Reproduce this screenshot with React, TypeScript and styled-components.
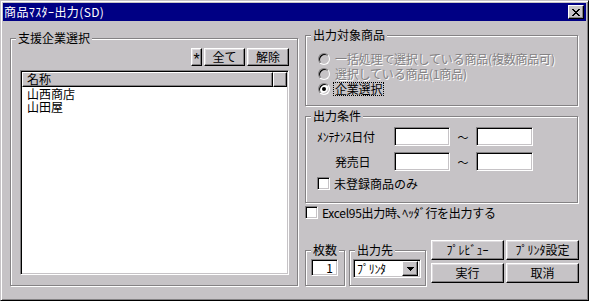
import React from 'react';
import styled, { createGlobalStyle } from 'styled-components';

const FACE = '#c6c3c6';
const SHADOW = '#848284';

const GlobalStyle = createGlobalStyle`
  html, body {
    margin: 0;
    padding: 0;
    background: ${FACE};
  }
  body {
    font-family: "Noto Sans CJK JP", "Liberation Sans", sans-serif;
    font-size: 12px;
    color: #000;
  }
  * {
    box-sizing: border-box;
  }
`;

const Window = styled.div`
  width: 589px;
  height: 301px;
  background: ${FACE};
  border: 1px solid;
  border-color: ${FACE} #000 #000 ${FACE};
  box-shadow: inset 1px 1px #fff, inset -1px -1px ${SHADOW};
  padding: 2px;
  display: flex;
  flex-direction: column;
`;

const TitleBar = styled.div`
  height: 18px;
  background: #000084;
  color: #fff;
  display: flex;
  align-items: center;
  justify-content: space-between;
  padding: 0 2px 0 1px;
  line-height: 14px;
`;

const TitleText = styled.span`
  font-size: 12px;
  letter-spacing: 0.4px;
`;

const CloseBtn = styled.div`
  width: 16px;
  height: 14px;
  background: ${FACE};
  border: 1px solid;
  border-color: #fff #000 #000 #fff;
  box-shadow: inset -1px -1px ${SHADOW};
  display: flex;
  align-items: center;
  justify-content: center;
`;

const Body = styled.div`
  flex: 1;
  display: flex;
  gap: 7px;
  padding: 14px 0 0 7px;
`;

const GroupBox = styled.div<{ w: number; h: number }>`
  position: relative;
  width: ${p => p.w}px;
  height: ${p => p.h}px;
  border: 1px solid ${SHADOW};
  box-shadow: inset 1px 1px #fff, 1px 1px #fff;
  flex-shrink: 0;
`;

const Legend = styled.span`
  position: absolute;
  top: -8px;
  left: 5px;
  padding: 0 2px;
  background: ${FACE};
  line-height: 14px;
  white-space: nowrap;
`;

const LeftGroup = styled(GroupBox)`
  margin-top: 3px;
  padding: 9px 8px 0 9px;
`;

const ButtonRow = styled.div`
  display: flex;
  justify-content: flex-end;
  gap: 2px;
`;

const Button = styled.button<{ w: number; h: number }>`
  width: ${p => p.w}px;
  height: ${p => p.h}px;
  padding: 0;
  margin: 0;
  background: ${FACE};
  border: 1px solid;
  border-color: #fff #000 #000 #fff;
  box-shadow: inset -1px -1px ${SHADOW}, inset 1px 1px #dedbde;
  font-family: inherit;
  font-size: 12px;
  line-height: 14px;
  color: #000;
  display: flex;
  align-items: center;
  justify-content: center;
  white-space: nowrap;
`;

const StarButton = styled(Button)`
  font-family: "Liberation Sans", sans-serif;
  font-size: 16px;
  line-height: 12px;
  padding-top: 5px;
`;

const Sunken = styled.div<{ w: number; h: number }>`
  width: ${p => p.w}px;
  height: ${p => p.h}px;
  background: #fff;
  border: 1px solid;
  border-color: ${SHADOW} #fff #fff ${SHADOW};
  box-shadow: inset 1px 1px #000, inset -1px -1px ${FACE};
  flex-shrink: 0;
`;

const ListBox = styled(Sunken)`
  margin-top: 4px;
  padding: 1px;
  display: flex;
  flex-direction: column;
`;

const ListHeader = styled.div`
  display: flex;
  height: 15px;
`;

const HeaderCell = styled.div<{ w?: number }>`
  ${p => (p.w ? `width: ${p.w}px;` : 'flex: 1;')}
  height: 15px;
  background: ${FACE};
  border: 1px solid;
  border-color: #fff #000 #000 #fff;
  box-shadow: inset -1px -1px ${SHADOW};
  padding-left: 4px;
  line-height: 12px;
`;

const ListItem = styled.div`
  padding-left: 5px;
  line-height: 13px;
  height: 13px;
`;

const RightColumn = styled.div`
  width: 273px;
  display: flex;
  flex-direction: column;
`;

const RadioList = styled.div`
  padding: 15px 0 0 12px;
  display: flex;
  flex-direction: column;
`;

const RadioRow = styled.div`
  height: 15px;
  display: flex;
  align-items: center;
  gap: 4px;
`;

const RadioCircle = styled.span<{ on?: boolean; disabled?: boolean }>`
  width: 12px;
  height: 12px;
  border-radius: 50%;
  border: 1px solid;
  border-color: ${SHADOW} #fff #fff ${SHADOW};
  box-shadow: inset 1px 1px #000, inset -1px -1px ${FACE};
  background: ${p => (p.disabled ? FACE : '#fff')};
  display: flex;
  align-items: center;
  justify-content: center;
  flex-shrink: 0;
  &::after {
    content: '';
    display: ${p => (p.on ? 'block' : 'none')};
    width: 4px;
    height: 4px;
    border-radius: 50%;
    background: #000;
  }
`;

const RadioText = styled.span<{ disabled?: boolean; focused?: boolean }>`
  display: inline-block;
  height: 14px;
  line-height: 12px;
  white-space: nowrap;
  letter-spacing: -0.2px;
  color: ${p => (p.disabled ? SHADOW : '#000')};
  text-shadow: ${p => (p.disabled ? '1px 1px #fff' : 'none')};
  border: 1px dotted ${p => (p.focused ? '#000' : 'transparent')};
  padding: 0 1px;
  margin-left: -1px;
`;

const CondGroup = styled(GroupBox)`
  margin-top: 10px;
  padding: 10px 0 0 0;
`;

const FieldRow = styled.div`
  height: 19px;
  margin-bottom: 6px;
  display: flex;
  align-items: center;
`;

const FieldLabel = styled.span<{ indent: number }>`
  width: 88px;
  padding-left: ${p => p.indent}px;
  white-space: nowrap;
  letter-spacing: -0.3px;
`;

const Tilde = styled.span`
  width: 26px;
  text-align: center;
  font-size: 11px;
`;

const CheckRow = styled.label<{ indent: number }>`
  display: flex;
  align-items: center;
  gap: 4px;
  padding-left: ${p => p.indent}px;
  height: 13px;
  line-height: 13px;
  white-space: nowrap;
`;

const CheckBox = styled(Sunken)``;

const ExcelRow = styled(CheckRow)`
  margin-top: 3px;
  letter-spacing: -0.3px;
`;

const BottomRow = styled.div`
  margin-top: 21px;
  display: flex;
  align-items: flex-start;
`;

const SmallGroup = styled(GroupBox)<{ gapLeft: number; padLeft: number }>`
  margin-top: 10px;
  margin-left: ${p => p.gapLeft}px;
  padding: 8px 0 0 ${p => p.padLeft}px;
`;

const CountInput = styled(Sunken)`
  text-align: right;
  padding-right: 4px;
  line-height: 15px;
`;

const Select = styled(Sunken)`
  display: flex;
  align-items: center;
  justify-content: space-between;
  padding: 2px;
  line-height: 14px;
`;

const SelectText = styled.span`
  padding-left: 1px;
  letter-spacing: -0.3px;
`;

const DropBtn = styled.span`
  width: 16px;
  height: 15px;
  background: ${FACE};
  border: 1px solid;
  border-color: #fff #000 #000 #fff;
  box-shadow: inset -1px -1px ${SHADOW};
  display: flex;
  align-items: center;
  justify-content: center;
`;

const ActionGrid = styled.div`
  margin-left: 5px;
  display: grid;
  grid-template-columns: 73px 73px;
  grid-template-rows: 20px 20px;
  column-gap: 2px;
  row-gap: 3px;
`;

const App = () => {
  return (
    <>
      <GlobalStyle />
      <Window>
        <TitleBar>
          <TitleText>商品ﾏｽﾀｰ出力(SD)</TitleText>
          <CloseBtn>
            <svg width="8" height="7" viewBox="0 0 8 7" shapeRendering="crispEdges">
              <path d="M0 0h2v1H0zM6 0h2v1H6zM1 1h2v1H1zM5 1h2v1H5zM2 2h4v1H2zM3 3h2v1H3zM2 4h4v1H2zM1 5h2v1H1zM5 5h2v1H5zM0 6h2v1H0zM6 6h2v1H6z" fill="#000" />
            </svg>
          </CloseBtn>
        </TitleBar>
        <Body>
          <LeftGroup w={288} h={248}>
            <Legend>支援企業選択</Legend>
            <ButtonRow>
              <StarButton w={11} h={18}>*</StarButton>
              <Button w={41} h={18}>全て</Button>
              <Button w={42} h={18}>解除</Button>
            </ButtonRow>
            <ListBox w={269} h={205}>
              <ListHeader>
                <HeaderCell w={251}>名称</HeaderCell>
                <HeaderCell />
              </ListHeader>
              <ListItem>山西商店</ListItem>
              <ListItem>山田屋</ListItem>
            </ListBox>
          </LeftGroup>
          <RightColumn>
            <GroupBox w={273} h={71}>
              <Legend>出力対象商品</Legend>
              <RadioList>
                <RadioRow>
                  <RadioCircle disabled />
                  <RadioText disabled>一括処理で選択している商品(複数商品可)</RadioText>
                </RadioRow>
                <RadioRow>
                  <RadioCircle disabled />
                  <RadioText disabled>選択している商品(1商品)</RadioText>
                </RadioRow>
                <RadioRow>
                  <RadioCircle on />
                  <RadioText focused>企業選択</RadioText>
                </RadioRow>
              </RadioList>
            </GroupBox>
            <CondGroup w={273} h={87}>
              <Legend>出力条件</Legend>
              <FieldRow>
                <FieldLabel indent={11}>ﾒﾝﾃﾅﾝｽ日付</FieldLabel>
                <Sunken w={56} h={19} />
                <Tilde>～</Tilde>
                <Sunken w={57} h={19} />
              </FieldRow>
              <FieldRow>
                <FieldLabel indent={29}>発売日</FieldLabel>
                <Sunken w={56} h={19} />
                <Tilde>～</Tilde>
                <Sunken w={57} h={19} />
              </FieldRow>
              <CheckRow indent={11}>
                <CheckBox w={13} h={13} />
                <span>未登録商品のみ</span>
              </CheckRow>
            </CondGroup>
            <ExcelRow indent={0}>
              <CheckBox w={13} h={13} />
              <span>Excel95出力時､ﾍｯﾀﾞ行を出力する</span>
            </ExcelRow>
            <BottomRow>
              <SmallGroup w={40} h={36} gapLeft={0} padLeft={5}>
                <Legend>枚数</Legend>
                <CountInput w={27} h={17}>1</CountInput>
              </SmallGroup>
              <SmallGroup w={77} h={36} gapLeft={4} padLeft={3}>
                <Legend>出力先</Legend>
                <Select w={68} h={19}>
                  <SelectText>ﾌﾟﾘﾝﾀ</SelectText>
                  <DropBtn>
                    <svg width="7" height="4" viewBox="0 0 7 4" shapeRendering="crispEdges">
                      <path d="M0 0h7v1H0zM1 1h5v1H1zM2 2h3v1H2zM3 3h1v1H3z" fill="#000" />
                    </svg>
                  </DropBtn>
                </Select>
              </SmallGroup>
              <ActionGrid>
                <Button w={73} h={20}>ﾌﾟﾚﾋﾞｭｰ</Button>
                <Button w={73} h={20}>ﾌﾟﾘﾝﾀ設定</Button>
                <Button w={73} h={20}>実行</Button>
                <Button w={73} h={20}>取消</Button>
              </ActionGrid>
            </BottomRow>
          </RightColumn>
        </Body>
      </Window>
    </>
  );
};

export default App;
